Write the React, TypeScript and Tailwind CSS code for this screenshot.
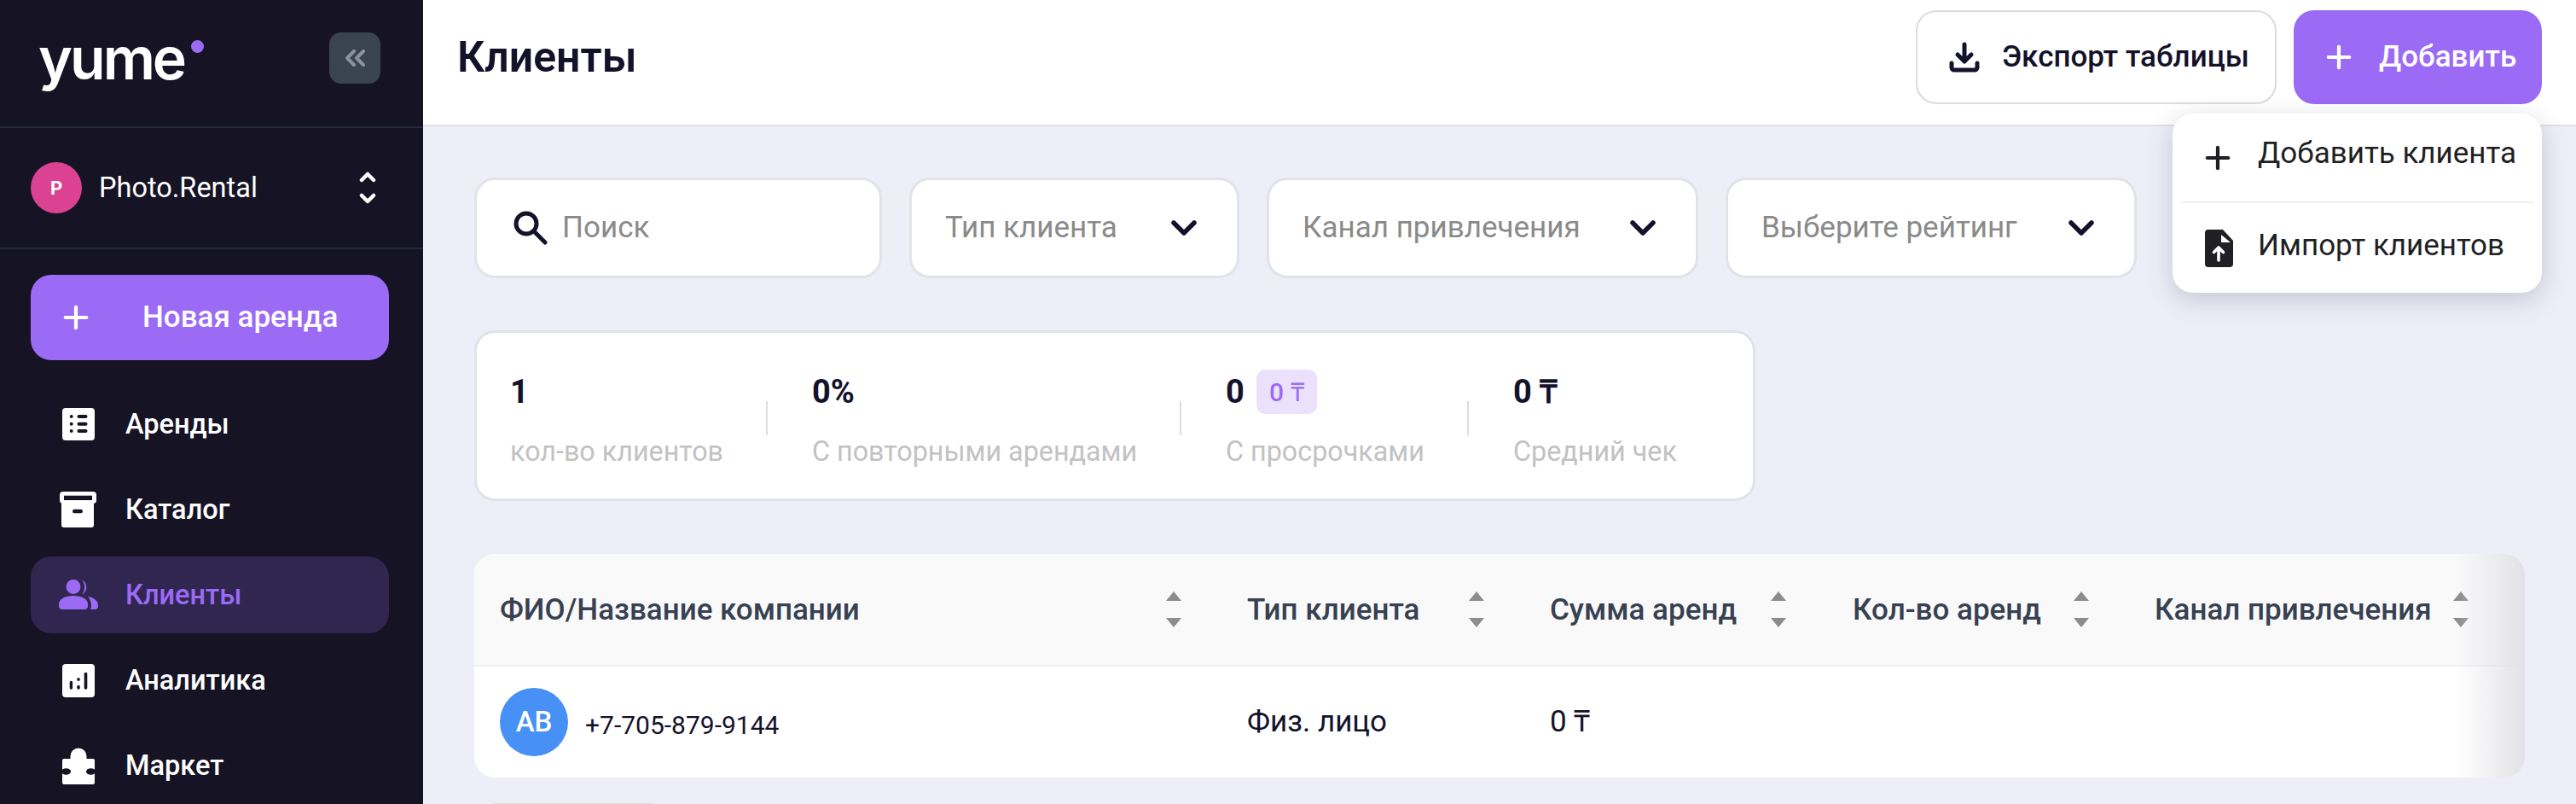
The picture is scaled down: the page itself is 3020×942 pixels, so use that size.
import { Plus } from "lucide-react";

const DARK = "#151324";

function ListIcon() {
  return (
    <svg width="38" height="38" viewBox="0 0 38 38">
      <rect width="38" height="38" rx="4" fill="#fff" />
      <g fill={DARK}>
        <circle cx="10.7" cy="10" r="2" />
        <circle cx="10.7" cy="18.7" r="2" />
        <circle cx="10.7" cy="27" r="2" />
        <rect x="17.5" y="8" width="12" height="4" rx="2" />
        <rect x="17.5" y="16.700" width="12" height="4" rx="2" />
        <rect x="17.5" y="25" width="12" height="4" rx="2" />
      </g>
    </svg>
  );
}

function BoxIcon() {
  return (
    <svg width="43" height="42" viewBox="0 0 43 42">
      <rect width="43" height="14" rx="4" fill="#fff" />
      <rect x="5" y="4.700" width="33" height="5.300" fill={DARK} />
      <path d="M2 12h38v27a3 3 0 0 1-3 3H5a3 3 0 0 1-3-3z" fill="#fff" />
      <rect x="15" y="20.700" width="12" height="4.600" rx="2.300" fill={DARK} />
    </svg>
  );
}

function UsersIcon() {
  return (
    <svg width="46" height="36" viewBox="0 0 46 36" fill="#9b6bf5">
      <circle cx="17" cy="8.500" r="8.500" />
      <path d="M27 .5a9.500 9.500 0 0 1 0 17 13 13 0 0 0 0-17z" />
      <path d="M0 29c0-6 7-10 17-10s17 4 17 10v2c0 2.500-1.500 4-4 4H4c-2.500 0-4-1.500-4-4z" />
      <path d="M34 20c7 1 12 5 12 10v1c0 2.500-1.500 4-4 4h-5c.8-1.500 1-3 1-5 0-4-1.500-7-4-10z" />
    </svg>
  );
}

function ChartIcon() {
  return (
    <svg width="38" height="39" viewBox="0 0 38 39">
      <rect width="38" height="39" rx="4" fill="#fff" />
      <g fill={DARK}>
        <rect x="8.700" y="19.700" width="3.400" height="10" rx="1.700" />
        <rect x="17.300" y="16" width="3.400" height="4" rx="1.700" />
        <rect x="17.300" y="24.700" width="3.400" height="5" rx="1.700" />
        <rect x="25.700" y="9.700" width="3.600" height="20" rx="1.800" />
      </g>
    </svg>
  );
}

function PuzzleIcon() {
  return (
    <svg width="38" height="43" viewBox="0 0 38 43">
      <path
        d="M9.500 13v-3a9.500 9.500 0 0 1 19 0v3H36a2 2 0 0 1 2 2v26a2 2 0 0 1-2 2H2a2 2 0 0 1-2-2V15a2 2 0 0 1 2-2z"
        fill="#fff"
      />
      <ellipse cx="4.500" cy="28" rx="5.500" ry="3.800" fill={DARK} />
      <ellipse cx="33.500" cy="28" rx="5.500" ry="3.800" fill={DARK} />
    </svg>
  );
}

function FileUpIcon() {
  return (
    <svg width="33" height="44" viewBox="0 0 33 44" className="shrink-0">
      <path d="M4 0h17l12 13v27a4 4 0 0 1-4 4H4a4 4 0 0 1-4-4V4a4 4 0 0 1 4-4z" fill="#1f1f24" />
      <path d="M19 6l11 9H19z" fill="#fff" />
      <path d="M16 36V21M10.500 26.500L16 21l5.500 5.500" fill="none" stroke="#fff" strokeWidth="3.600" strokeLinecap="round" strokeLinejoin="round" />
    </svg>
  );
}

function Chevron() {
  return (
    <svg width="30" height="18" viewBox="0 0 30 18" fill="none">
      <path d="M3 3l12 12L27 3" stroke="#14122a" strokeWidth="5.500" strokeLinecap="round" strokeLinejoin="round" />
    </svg>
  );
}

function SortArrows() {
  return (
    <svg width="20" height="42" viewBox="0 0 20 42" fill="#8c8c8c" className="shrink-0">
      <path d="M10 0l9 11H1z" />
      <path d="M10 42l9-11H1z" />
    </svg>
  );
}

function NavItem({ icon, label, active }: { icon: React.ReactNode; label: string; active?: boolean }) {
  return (
    <div
      className={
        active
          ? "h-[90px] ml-[36px] mr-[40px] rounded-[24px] bg-[#312650] flex items-center text-[#9b6bf5] my-[5px]"
          : "h-[100px] ml-[36px] mr-[40px] flex items-center text-white"
      }
    >
      <div className="w-[111px] flex justify-center">{icon}</div>
      <span className="text-[32.5px] leading-none font-medium">{label}</span>
    </div>
  );
}

function Filter({ label, width }: { label: string; width: string }) {
  return (
    <div className={`${width} h-[118px] bg-white rounded-[24px] border-[3px] border-[#e2e3e9] flex items-center justify-between pl-[39px] pr-[47px]`}>
      <span className="text-[35px] text-[#8a8a8a]">{label}</span>
      <Chevron />
    </div>
  );
}

function Stat({ value, label, width, divider }: { value: React.ReactNode; label: string; width: string; divider?: boolean }) {
  return (
    <div className={`${width} relative flex flex-col`}>
      <div className="h-[52px] flex items-center gap-[14px] text-[38px] font-bold text-[#14122a]">{value}</div>
      <div className="mt-[24px] text-[32.3px] leading-[40px] text-[#c2c2c2] whitespace-nowrap">{label}</div>
      {divider && <div className="absolute right-[52px] top-[37px] w-[2px] h-[40px] bg-[#dcdcdc]" />}
    </div>
  );
}

function HeadCell({ label, width, pad }: { label: string; width: string; pad: string }) {
  return (
    <div className={`${width} ${pad} pl-[30px] flex items-center justify-between`}>
      <span className="text-[35px] font-medium text-[#374151] whitespace-nowrap mt-[2px]">{label}</span>
      <SortArrows />
    </div>
  );
}

export default function App() {
  return (
    <div className="h-[942px] w-[3020px] overflow-hidden flex font-['Roboto',sans-serif] relative">
      {/* sidebar */}
      <aside className="w-[496px] shrink-0 bg-[#151324] flex flex-col">
        <div className="h-[150px] shrink-0 border-b-[2px] border-[#252a38] flex justify-between pl-[45px] pr-[50px] pt-[38px]">
          <div className="relative h-[60px]">
            <span className="font-['Inter',sans-serif] font-semibold text-[68px] leading-[60px] tracking-[-3px] text-white">yume</span>
            <span className="absolute left-[179px] top-[9px] w-[15px] h-[15px] rounded-full bg-[#9b6bf5]" />
          </div>
          <div className="w-[60px] h-[60px] rounded-[14px] bg-[#3a4350] flex items-center justify-center">
            <svg width="24" height="20" viewBox="0 0 24 20" fill="none" stroke="#8b93a0" strokeWidth="4" strokeLinecap="round" strokeLinejoin="round">
              <path d="M11 2L3 10l8 8M22 2l-8 8 8 8" />
            </svg>
          </div>
        </div>
        <div className="h-[142px] shrink-0 border-b-[2px] border-[#252a38] flex items-center pl-[36px] pr-[55px]">
          <div className="w-[60px] h-[60px] rounded-full bg-[#db4292] text-white text-[22px] font-bold flex items-center justify-center">P</div>
          <span className="ml-[20px] text-[32.5px] text-white flex-1">Photo.Rental</span>
          <svg width="20" height="38" viewBox="0 0 20 38" fill="none" stroke="#fff" strokeWidth="4.500" strokeLinecap="round" strokeLinejoin="round">
            <path d="M3 10l7-7 7 7M3 28l7 7 7-7" />
          </svg>
        </div>
        <div className="mt-[30px] ml-[36px] mr-[40px] h-[100px] shrink-0 rounded-[24px] bg-[#9b6bf5] flex items-center text-white">
          <Plus size={42} strokeWidth={2.4} className="ml-[32px]" />
          <span className="ml-[57px] text-[35px] font-medium">Новая аренда</span>
        </div>
        <div className="mt-[25px] shrink-0">
          <NavItem icon={<ListIcon />} label="Аренды" />
          <NavItem icon={<BoxIcon />} label="Каталог" />
          <NavItem icon={<UsersIcon />} label="Клиенты" active />
          <NavItem icon={<ChartIcon />} label="Аналитика" />
          <NavItem icon={<PuzzleIcon />} label="Маркет" />
        </div>
      </aside>

      {/* content */}
      <main className="flex-1 bg-[#eeeef8] flex flex-col min-w-0">
        <header className="h-[148px] shrink-0 bg-white border-b-[2px] border-[#dfe0e6] flex items-center justify-between px-[40px] pb-[12px]">
          <h1 className="text-[50px] font-semibold text-[#14122a]">Клиенты</h1>
          <div className="flex gap-[20px]">
            <div className="w-[423px] h-[110px] rounded-[24px] border-[2px] border-[#dcdcdc] flex items-center pl-[37px] text-[#14122a]">
              <svg width="36" height="36" viewBox="0 0 36 36" fill="none" stroke="currentColor" strokeWidth="5" strokeLinecap="round" strokeLinejoin="round">
                <path d="M18 3v19M10 15l8 8 8-8" />
                <path d="M3 25v5a3 3 0 0 0 3 3h24a3 3 0 0 0 3-3v-5" />
              </svg>
              <span className="ml-[26px] text-[35px] font-medium">Экспорт таблицы</span>
            </div>
            <div className="w-[291px] h-[110px] rounded-[24px] bg-[#9b6bf5] flex items-center pl-[32px] text-white">
              <Plus size={42} strokeWidth={2.4} />
              <span className="ml-[26px] text-[35px] font-medium">Добавить</span>
            </div>
          </div>
        </header>

        <div className="pl-[60px] pr-[60px] pt-[60px]">
          <div className="flex gap-[32px]">
            <div className="w-[478px] h-[118px] bg-white rounded-[24px] border-[3px] border-[#e2e3e9] flex items-center pl-[43px]">
              <svg width="40" height="40" viewBox="0 0 40 40" fill="none" stroke="#14122a" strokeWidth="5" strokeLinecap="round">
                <circle cx="15" cy="15" r="12" />
                <path d="M24 24l13 13" />
              </svg>
              <span className="ml-[17px] text-[35px] text-[#8a8a8a]">Поиск</span>
            </div>
            <Filter label="Тип клиента" width="w-[387px]" />
            <Filter label="Канал привлечения" width="w-[506px]" />
            <Filter label="Выберите рейтинг" width="w-[482px]" />
          </div>

          <div className="mt-[61px] w-[1502px] h-[200px] bg-white rounded-[24px] border-[3px] border-[#e2e3e9] flex pl-[39px] pt-[43px]">
            <Stat width="w-[354px]" value="1" label="кол-во клиентов" divider />
            <Stat width="w-[485px]" value="0%" label="С повторными арендами" divider />
            <Stat
              width="w-[337px]"
              value={
                <>
                  <span>0</span>
                  <span className="w-[71px] h-[52px] rounded-[10px] bg-[#ebe1fd] text-[#9b6bf5] text-[30px] font-medium flex items-center justify-center">0 ₸</span>
                </>
              }
              label="С просрочками"
              divider
            />
            <Stat width="w-[250px]" value="0 ₸" label="Средний чек" />
          </div>

          <div className="mt-[62px] w-[2404px] h-[262px] rounded-[24px] overflow-hidden relative bg-white">
            <div className="h-[132px] bg-[#f9f9fa] border-b-[2px] border-[#eef0f4] flex items-center">
              <HeadCell label="ФИО/Название компании" width="w-[876px]" pad="pr-[46px]" />
              <HeadCell label="Тип клиента" width="w-[355px]" pad="pr-[46px]" />
              <HeadCell label="Сумма аренд" width="w-[355px]" pad="pr-[47px]" />
              <HeadCell label="Кол-во аренд" width="w-[354px]" pad="pr-[46px]" />
              <HeadCell label="Канал привлечения" width="w-[464px]" pad="pr-[65px]" />
            </div>
            <div className="h-[130px] flex items-center">
              <div className="w-[876px] pl-[30px] flex items-center">
                <div className="w-[80px] h-[80px] rounded-full bg-[#4790f5] text-white text-[33px] font-medium flex items-center justify-center">AB</div>
                <span className="ml-[20px] mt-[6px] text-[30px] text-[#14122a]">+7-705-879-9144</span>
              </div>
              <div className="w-[355px] pl-[30px] text-[35px] text-[#14122a]">Физ. лицо</div>
              <div className="pl-[30px] text-[35px] text-[#14122a]">0 ₸</div>
            </div>
            <div className="absolute right-0 top-0 bottom-0 w-[80px] bg-gradient-to-r from-transparent to-[#e2e2e6]" />
          </div>

          <div className="mt-[30px] ml-[13px] w-[206px] h-[60px] rounded-[12px] border-[2px] border-[#dcdcdc]" />
        </div>
      </main>

      {/* dropdown */}
      <div className="absolute left-[2547px] top-[133px] w-[433px] h-[210px] bg-white rounded-[24px] shadow-[0_8px_30px_rgba(60,60,90,0.22)] px-[10px] flex flex-col text-[#1f1f24]">
        <div className="h-[105px] flex items-center pl-[22px] border-b-[2px] border-[#f0f0f4]">
          <Plus size={42} strokeWidth={2.4} />
          <span className="ml-[26px] text-[35px] mb-[8px]">Добавить клиента</span>
        </div>
        <div className="h-[105px] flex items-center pl-[28px]">
          <FileUpIcon />
          <span className="ml-[29px] text-[35px] mb-[5px]">Импорт клиентов</span>
        </div>
      </div>
    </div>
  );
}
